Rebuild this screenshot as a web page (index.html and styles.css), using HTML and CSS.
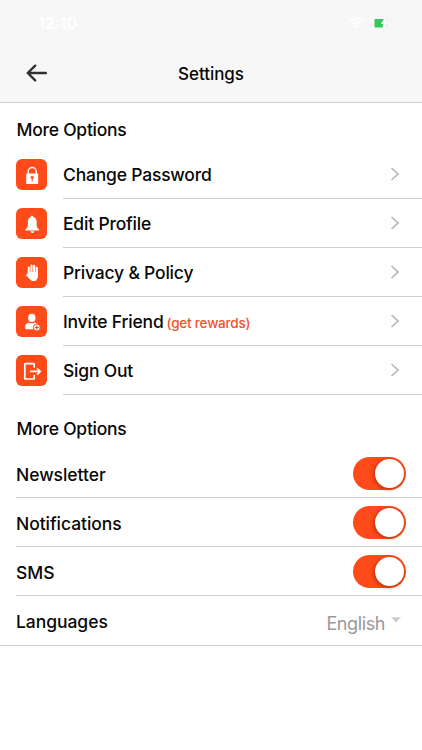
FILE: index.html
```html
<!DOCTYPE html>
<html lang="en">
<head>
    <meta charset="UTF-8">
    <meta name="viewport" content="width=device-width, initial-scale=1.0">
    <title>Settings</title>
    <link rel="stylesheet" href="styles.css">
</head>
<body>
    <header class="header">
        <div class="status-bar">
            <span class="time">12:10</span>
            <div class="status-icons">
                <svg class="wifi" viewBox="0 0 16 12" width="16" height="12">
                    <path d="M1 4.5Q8-2 15 4.5M3.5 7.2Q8 3 12.5 7.2" fill="none" stroke="#fff" stroke-width="1.8"/>
                    <path d="M5.5 9Q8 7 10.5 9L8 11.5z" fill="#fff"/>
                </svg>
                <svg class="battery" viewBox="0 0 24 11" width="24" height="11">
                    <path d="M1.5 1H10L6.8 6H9.2L8.5 9.5H1.5Q.5 9.5.5 8.5V2Q.5 1 1.5 1z" fill="#34c759"/>
                    <path d="M11 .5L7.5 6H10L9 10.5L13 4.5H10.6z" fill="#fff"/>
                    <path d="M12.5 2.6L13.3 2M11.8 8.3L12.8 7.2" stroke="#8edba2" stroke-width=".8"/>
                </svg>
            </div>
        </div>
        <nav class="nav-bar">
            <a class="back" aria-label="Back">
                <svg viewBox="0 0 22 18" width="22" height="18">
                    <path d="M19.8 9H2M9.2 1.7L1.7 9L9.2 16.3" fill="none" stroke="#303030" stroke-width="2.4" stroke-linecap="round" stroke-linejoin="round"/>
                </svg>
            </a>
            <h1>Settings</h1>
        </nav>
    </header>

    <main>
        <section>
            <h2>More Options</h2>
            <ul class="menu">
                <li>
                    <span class="icon">
                        <svg viewBox="0 0 30 30" width="30" height="30">
                            <path d="M11.2 14V11.5a4 4 0 0 1 8 0V14" fill="none" stroke="#fff" stroke-width="1.4"/>
                            <rect x="9.2" y="13.5" width="12" height="10.5" rx=".6" fill="#fff"/>
                            <path d="M13.7 16.2h3v2.2h-1v3h-1v-3h-1z" fill="#ff4b1a"/>
                        </svg>
                    </span>
                    <div class="item">
                        <span class="label">Change Password</span>
                        <svg class="chevron" viewBox="0 0 10 14" width="10" height="14"><path d="M1.5 1L8 7L1.5 13"/></svg>
                    </div>
                </li>
                <li>
                    <span class="icon">
                        <svg viewBox="0 0 30 30" width="30" height="30">
                            <path d="M15 6.8c.8 0 1.3.5 1.4 1.3 2.3.7 3.3 2.6 3.3 5v3.2c0 1.9.8 3 2.3 4v1.2H8.5v-1.2c1.5-1 2.3-2.1 2.3-4v-3.2c0-2.4 1-4.3 2.8-5 .1-.8.6-1.3 1.4-1.3z" fill="#fff"/>
                            <path d="M13.3 22.3h4q-.2 1.6-2 1.6t-2-1.6z" fill="#fff"/>
                        </svg>
                    </span>
                    <div class="item">
                        <span class="label">Edit Profile</span>
                        <svg class="chevron" viewBox="0 0 10 14" width="10" height="14"><path d="M1.5 1L8 7L1.5 13"/></svg>
                    </div>
                </li>
                <li>
                    <span class="icon">
                        <svg viewBox="0 0 30 30" width="30" height="30">
                            <path d="M11.8 9.5V16M14.5 7.5V15M17.2 7.7V15M19.8 9.8V17" stroke="#fff" stroke-width="2.1" stroke-linecap="round"/>
                            <path d="M10.7 14H20.9V18.5Q20.9 20.5 19.4 21.8V22.2Q16.5 24 13.8 22.2L9.2 17.4Q8.8 15.8 10.7 16z" fill="#fff"/>
                        </svg>
                    </span>
                    <div class="item">
                        <span class="label">Privacy &amp; Policy</span>
                        <svg class="chevron" viewBox="0 0 10 14" width="10" height="14"><path d="M1.5 1L8 7L1.5 13"/></svg>
                    </div>
                </li>
                <li>
                    <span class="icon">
                        <svg viewBox="0 0 30 30" width="30" height="30">
                            <ellipse cx="14.8" cy="10.9" rx="3.7" ry="4.1" fill="#fff"/>
                            <path d="M8.2 22.2v-2.8q0-3 3.6-4 3 1.8 6 0 2.5.7 3.2 2v4.8z" fill="#fff"/>
                            <circle cx="19.8" cy="20.5" r="3.5" fill="#fff" stroke="#ff4b1a" stroke-width="1"/>
                            <path d="M19.8 18.5v4M17.8 20.5h4" stroke="#ff4b1a" stroke-width="1.2"/>
                        </svg>
                    </span>
                    <div class="item">
                        <span class="label">Invite Friend</span>
                        <span class="note">(get rewards)</span>
                        <svg class="chevron" viewBox="0 0 10 14" width="10" height="14"><path d="M1.5 1L8 7L1.5 13"/></svg>
                    </div>
                </li>
                <li>
                    <span class="icon">
                        <svg viewBox="0 0 30 30" width="30" height="30">
                            <path d="M17.2 11.8V8.2Q17.2 7.7 16.7 7.7H8.3Q7.8 7.7 7.8 8.2V22.5Q7.8 23 8.3 23H16.7Q17.2 23 17.2 22.5V19" fill="none" stroke="#fff" stroke-width="1.7"/>
                            <path d="M13 15.4H22.5M20 12.2L23.2 15.4L20 18.6" fill="none" stroke="#fff" stroke-width="1.6"/>
                        </svg>
                    </span>
                    <div class="item">
                        <span class="label">Sign Out</span>
                        <svg class="chevron" viewBox="0 0 10 14" width="10" height="14"><path d="M1.5 1L8 7L1.5 13"/></svg>
                    </div>
                </li>
            </ul>
        </section>

        <section class="preferences">
            <h2>More Options</h2>
            <ul class="options">
                <li><span class="label">Newsletter</span><span class="switch"></span></li>
                <li><span class="label">Notifications</span><span class="switch"></span></li>
                <li><span class="label">SMS</span><span class="switch"></span></li>
                <li class="languages">
                    <span class="label">Languages</span>
                    <span class="select">English
                        <svg viewBox="0 0 10 6" width="10" height="6"><path d="M0 .3H10L5 5.5z" fill="#ccc"/></svg>
                    </span>
                </li>
            </ul>
        </section>
    </main>
</body>
</html>
```
FILE: styles.css
```css
* {
    box-sizing: border-box;
}

body {
    margin: 0;
    background-color: #fff;
    color: #080808;
    font-family: Inter, 'Liberation Sans', sans-serif;
    font-weight: 500;
}

svg {
    display: block;
    flex-shrink: 0;
}

h1, h2, ul {
    margin: 0;
    padding: 0;
    font-weight: 500;
    list-style: none;
}

.header {
    height: 103px;
    background-color: #f7f7f7;
    border-bottom: 1px solid #cdcdcd;
}

.status-bar {
    display: flex;
    justify-content: space-between;
    align-items: center;
    height: 46px;
    padding: 0 24px 0 38px;
    color: #fff;
}

.time {
    font-size: 16px;
    font-weight: 600;
}

.status-icons {
    display: flex;
    align-items: center;
    gap: 9px;
}

.nav-bar {
    display: grid;
    grid-template-columns: 60px 1fr 60px;
    align-items: center;
    height: 54px;
}

.back {
    padding-left: 26px;
}

h1 {
    padding-top: 1px;
    text-align: center;
    font-size: 17px;
    letter-spacing: -0.05px;
}

h2 {
    height: 47px;
    padding: 0 16.5px;
    font-size: 17.5px;
    line-height: 54px;
    letter-spacing: -0.25px;
}

.menu li {
    display: flex;
    align-items: center;
    height: 49px;
    padding-left: 16px;
}

.icon {
    display: flex;
    justify-content: center;
    align-items: center;
    width: 31px;
    height: 31px;
    margin-right: 16px;
    border-radius: 6px;
    background-color: #ff4b1a;
}

.item {
    flex: 1;
    display: flex;
    align-items: center;
    height: 100%;
    padding-right: 22px;
    border-bottom: 1px solid #d0d0d0;
}

.label {
    padding-top: 1px;
    font-size: 17.5px;
    letter-spacing: -0.2px;
}

.note {
    margin: 4px 0 0 3px;
    color: #f2522b;
    font-size: 13.5px;
    letter-spacing: -0.2px;
}

.chevron {
    margin-left: auto;
    fill: none;
    stroke: #b4b4b4;
    stroke-width: 1.6;
}

.preferences {
    padding-top: 7px;
}

.preferences h2 {
    line-height: 54px;
}

.options li {
    display: flex;
    justify-content: space-between;
    align-items: center;
    height: 49px;
    margin-left: 16px;
    padding: 1px 16px 0 0;
    border-bottom: 1px solid #d0d0d0;
}

.options .label {
    letter-spacing: -0.05px;
}

.switch {
    display: flex;
    justify-content: flex-end;
    width: 53px;
    height: 33px;
    padding: 2px;
    border-radius: 17px;
    background-color: #ff4b1a;
}

.switch::after {
    content: '';
    width: 29px;
    height: 29px;
    border-radius: 50%;
    background-color: #fff;
    box-shadow: -1px 1px 4px rgba(90, 20, 0, 0.5);
}

.options .languages {
    height: 50px;
    margin-left: 0;
    padding: 0 21px 0 16px;
}

.select {
    display: flex;
    gap: 6px;
    padding-top: 7px;
    color: #999;
    font-size: 18px;
    font-weight: 400;
    line-height: 20px;
    letter-spacing: -0.4px;
}

.select svg {
    margin-top: 3px;
}
```
